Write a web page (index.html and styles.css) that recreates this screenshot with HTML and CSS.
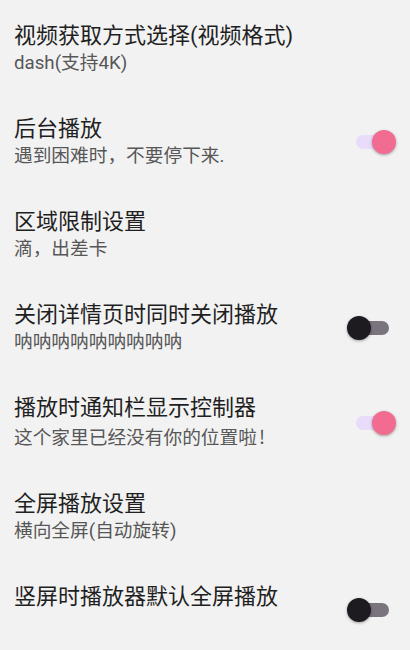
FILE: index.html
```html
<!DOCTYPE html>
<html lang="zh-CN">
<head>
<meta charset="utf-8">
<link rel="stylesheet" href="styles.css">
</head>
<body>
<div class="list">
  <div class="item">
    <div class="text">
      <div class="title">视频获取方式选择(视频格式)</div>
      <div class="sub">dash(支持4K)</div>
    </div>
  </div>
  <div class="item">
    <div class="text">
      <div class="title">后台播放</div>
      <div class="sub">遇到困难时，不要停下来.</div>
    </div>
    <div class="switch on"><span class="track"></span><span class="thumb"></span></div>
  </div>
  <div class="item">
    <div class="text">
      <div class="title">区域限制设置</div>
      <div class="sub">滴，出差卡</div>
    </div>
  </div>
  <div class="item">
    <div class="text">
      <div class="title">关闭详情页时同时关闭播放</div>
      <div class="sub">呐呐呐呐呐呐呐呐呐</div>
    </div>
    <div class="switch"><span class="track"></span><span class="thumb"></span></div>
  </div>
  <div class="item">
    <div class="text">
      <div class="title">播放时通知栏显示控制器</div>
      <div class="sub">这个家里已经没有你的位置啦<span class="cjk">!</span></div>
    </div>
    <div class="switch on"><span class="track"></span><span class="thumb"></span></div>
  </div>
  <div class="item">
    <div class="text">
      <div class="title">全屏播放设置</div>
      <div class="sub">横向全屏(自动旋转)</div>
    </div>
  </div>
  <div class="item">
    <div class="text">
      <div class="title">竖屏时播放器默认全屏播放</div>
      <div class="sub">&nbsp;</div>
    </div>
    <div class="switch"><span class="track"></span><span class="thumb"></span></div>
  </div>
</div>
</body>
</html>
```
FILE: styles.css
```css
html, body {
  margin: 0;
  padding: 0;
  background: #f2f2f2;
}
body {
  font-family: Roboto, "Noto Sans CJK SC", sans-serif;
  width: 410px;
  height: 650px;
  overflow: hidden;
}
.list {
  padding-top: 3px;
}
.item {
  display: flex;
  align-items: center;
  padding: 18px 14px 19px 14px;
}
.text {
  flex: 1;
  min-width: 0;
}
.title {
  font-size: 22px;
  line-height: 29px;
  color: #1f1f1f;
  white-space: nowrap;
}
.sub {
  font-size: 18.7px;
  line-height: 27px;
  color: #575757;
  white-space: nowrap;
}
.cjk {
  font-family: "Noto Sans CJK SC", sans-serif;
  padding-left: 2px;
}
.switch {
  position: relative;
  width: 49px;
  height: 24px;
  flex: none;
}
.track {
  position: absolute;
  left: 9px;
  top: 5px;
  width: 33px;
  height: 14px;
  border-radius: 7px;
  background: #79747e;
}
.thumb {
  position: absolute;
  left: 0;
  top: 0;
  width: 24px;
  height: 24px;
  border-radius: 50%;
  background: #1d1b20;
  box-shadow: 0 1px 3px rgba(0,0,0,0.35);
}
.switch.on .track {
  background: #e9dcfb;
}
.switch.on .thumb {
  left: 25px;
  background: #f26b90;
}
```
